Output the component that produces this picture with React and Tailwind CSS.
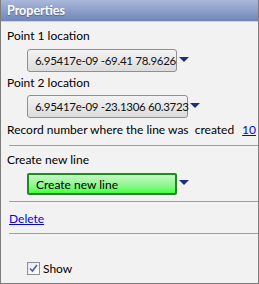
const Arrow = () => (
  <svg width="10" height="6" viewBox="0 0 10 6" className="ml-[2px] mt-[-2px]">
    <polygon points="0,0 10,0 5,5" fill="#1c2f7c" />
  </svg>
);

const DropBox = ({ value, width }) => (
  <div className="flex items-center pl-[26px]">
    <div
      className={`${width} h-[23px] flex items-center pl-[7px] rounded-[3px] border border-[#8e8f8f] bg-gradient-to-b from-[#f3f3f3] to-[#dcdcdc] text-[#111] text-[11.5px] tracking-[-0.3px] whitespace-nowrap`}
    >
      {value}
    </div>
    <Arrow />
  </div>
);

const Separator = () => <div className="ml-[8px] h-px bg-[#a0a0a0]" />;

const App = () => {
  return (
    <div
      className="w-[259px] h-[284px] flex flex-col bg-[#f2f2f2] border-l border-r border-b border-[#7d7d7d] text-[12px] text-black leading-[15px] overflow-hidden"
      style={{ fontFamily: 'Lato, "Noto Sans", sans-serif' }}
    >
      {/* Header */}
      <div className="h-[22px] flex items-center pl-[6px] bg-gradient-to-b from-[#aab9da] to-[#7185b8] border-b border-[#c9d1e4]">
        <span className="text-white font-bold text-[12.5px] [text-shadow:0_1px_1px_rgba(40,50,90,0.5)]">
          Properties
        </span>
      </div>

      <div className="pl-[6px] mt-[6px]">Point 1 location</div>
      <div className="mt-[6px]">
        <DropBox value="6.95417e-09 -69.41 78.9626" width="w-[150px]" />
      </div>

      <div className="pl-[6px] mt-[3px]">Point 2 location</div>
      <div className="mt-[5px]">
        <DropBox value="6.95417e-09 -23.1306 60.3723" width="w-[161px]" />
      </div>

      <div className="pl-[6px] mt-[4px] flex whitespace-nowrap">
        <span>Record number where the line was&nbsp; created</span>
        <a href="#" className="ml-[8px] text-[#0000ff] underline">
          10
        </a>
      </div>

      <div className="mt-[8px]">
        <Separator />
      </div>

      <div className="pl-[6px] mt-[6px]">Create new line</div>
      <div className="mt-[6px] flex items-center pl-[26px]">
        <div className="w-[150px] h-[22px] flex items-center pl-[7px] rounded-[2px] border-2 border-[#1f8a1f] bg-gradient-to-b from-[#c4f7c4] via-[#98f598] to-[#3cff3c] text-black whitespace-nowrap">
          Create new line
        </div>
        <Arrow />
      </div>

      <div className="mt-[6px]">
        <Separator />
      </div>

      <div className="pl-[8px] mt-[9px]">
        <a href="#" className="text-[#0000ff] underline">
          Delete
        </a>
      </div>

      <div className="mt-[7px]">
        <Separator />
      </div>

      <label className="mt-[27px] pl-[26px] flex items-center gap-[3px]">
        <span className="w-[13px] h-[13px] border border-[#8f8f8f] bg-gradient-to-br from-[#e8e8e8] to-[#ffffff] flex items-center justify-center">
          <svg width="9" height="9" viewBox="0 0 9 9">
            <path d="M1 4.5 L3.5 7 L8 1" stroke="#4a5fa8" strokeWidth="1.6" fill="none" />
          </svg>
        </span>
        <span>Show</span>
      </label>
    </div>
  );
};

export default App;
